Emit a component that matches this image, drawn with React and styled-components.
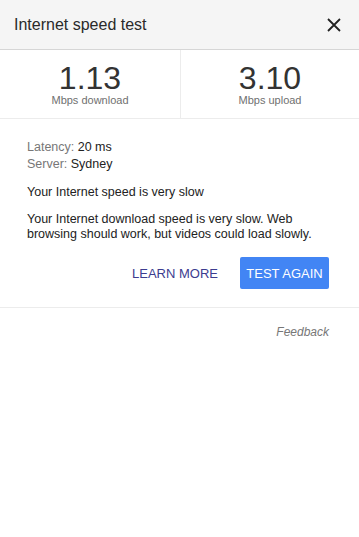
import styled, { createGlobalStyle } from 'styled-components';

const GlobalStyle = createGlobalStyle`
  html, body {
    margin: 0;
    padding: 0;
    background: #fff;
  }
  body {
    font-family: "Liberation Sans", Arial, sans-serif;
    color: #222;
  }
`;

const Card = styled.div`
  width: 359px;
  min-height: 537px;
  background: #fff;
`;

const Header = styled.div`
  height: 49px;
  display: flex;
  align-items: center;
  justify-content: space-between;
  padding: 0 15px 0 14px;
  background: #f5f5f5;
  border-bottom: 1px solid #d6d6d6;
`;

const Title = styled.div`
  font-size: 16px;
  color: #2a2a2a;
`;

const CloseButton = styled.button`
  width: 20px;
  height: 20px;
  padding: 0;
  border: 0;
  background: none;
  display: flex;
  align-items: center;
  justify-content: center;
  cursor: pointer;
`;

const Stats = styled.div`
  display: grid;
  grid-template-columns: 180px 1fr;
  border-bottom: 1px solid #ececec;
`;

const Stat = styled.div`
  height: 68px;
  display: flex;
  flex-direction: column;
  align-items: center;
  padding-top: 12px;
  box-sizing: border-box;
  border-left: ${(p) => (p.divided ? '1px solid #ececec' : 'none')};
`;

const Value = styled.div`
  font-size: 32px;
  line-height: 32px;
  color: #333;
`;

const Unit = styled.div`
  font-size: 11px;
  line-height: 12px;
  color: #707070;
`;

const Body = styled.div`
  padding: 20px 30px 18px 27px;
  border-bottom: 1px solid #ececec;
`;

const Meta = styled.div`
  font-size: 12.5px;
  line-height: 17px;
  color: #222;
`;

const Label = styled.span`
  color: #777;
`;

const Message = styled.p`
  margin: ${(p) => p.mt}px 0 0;
  font-size: 12.5px;
  line-height: 15px;
  color: #222;
`;

const Actions = styled.div`
  display: flex;
  justify-content: flex-end;
  align-items: center;
  gap: 22px;
  margin-top: 15px;
`;

const TextButton = styled.button`
  border: 0;
  background: none;
  padding: 0;
  font-family: inherit;
  font-size: 13px;
  color: #3c3c8f;
  cursor: pointer;
`;

const PrimaryButton = styled.button`
  width: 89px;
  height: 32px;
  border: 0;
  border-radius: 2px;
  background: #4285f4;
  color: #fff;
  font-family: inherit;
  font-size: 13px;
  padding: 0;
  cursor: pointer;
`;

const Footer = styled.div`
  display: flex;
  justify-content: flex-end;
  padding: 17px 30px 0;
`;

const Feedback = styled.a`
  font-size: 12px;
  font-style: italic;
  color: #777;
`;

export default function App() {
  return (
    <Card>
      <GlobalStyle />
      <Header>
        <Title>Internet speed test</Title>
        <CloseButton aria-label="Close">
          <svg width="14" height="14" viewBox="0 0 14 14">
            <path d="M1 1 L13 13 M13 1 L1 13" stroke="#222" strokeWidth="1.8" />
          </svg>
        </CloseButton>
      </Header>
      <Stats>
        <Stat>
          <Value>1.13</Value>
          <Unit>Mbps download</Unit>
        </Stat>
        <Stat divided>
          <Value>3.10</Value>
          <Unit>Mbps upload</Unit>
        </Stat>
      </Stats>
      <Body>
        <Meta>
          <Label>Latency:</Label> 20 ms
        </Meta>
        <Meta>
          <Label>Server:</Label> Sydney
        </Meta>
        <Message mt={12}>Your Internet speed is very slow</Message>
        <Message mt={12}>
          Your Internet download speed is very slow. Web browsing should work, but videos could load slowly.
        </Message>
        <Actions>
          <TextButton>LEARN MORE</TextButton>
          <PrimaryButton>TEST AGAIN</PrimaryButton>
        </Actions>
      </Body>
      <Footer>
        <Feedback>Feedback</Feedback>
      </Footer>
    </Card>
  );
}
